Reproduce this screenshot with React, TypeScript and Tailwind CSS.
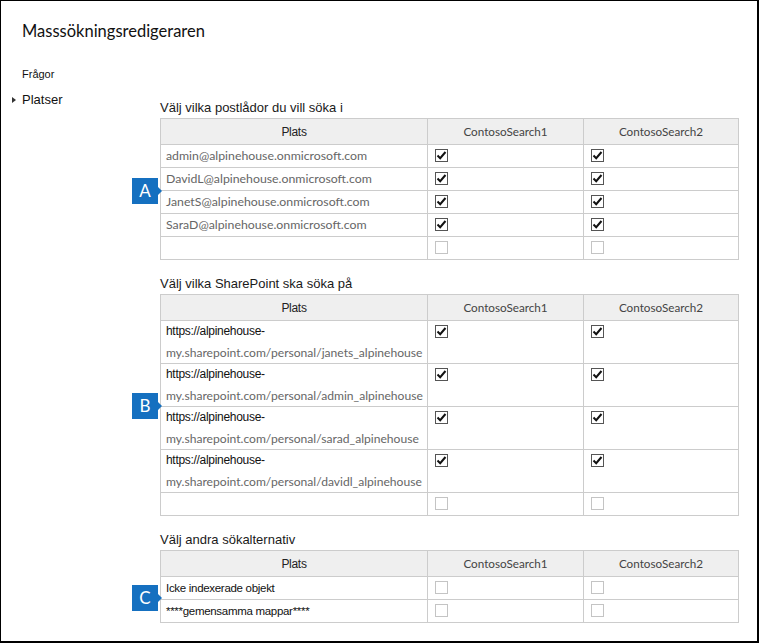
import React from "react";

const seg = "font-['Lato','Open_Sans',sans-serif]";
const ari = "font-['Liberation_Sans',Arial,sans-serif]";

function Check({ on }: { on: boolean }) {
  return (
    <div
      className={`w-[13px] h-[13px] border ${on ? "border-[#555]" : "border-[#c4c4c4]"} bg-white flex items-center justify-center`}
    >
      {on && (
        <svg width="11" height="11" viewBox="0 0 11 11">
          <path d="M1.5 5.5 L4.2 8.2 L9.5 2" fill="none" stroke="#111" strokeWidth="2" />
        </svg>
      )}
    </div>
  );
}

function Badge({ letter, top }: { letter: string; top: number }) {
  return (
    <div className="absolute left-[131px] flex items-center" style={{ top }}>
      <div className={`w-[26px] h-[26px] bg-[#1570c0] text-white text-[17px] flex items-center justify-center ${seg}`}>
        {letter}
      </div>
      <div className="w-0 h-0 border-y-[4px] border-y-transparent border-l-[4px] border-l-[#1570c0]" />
    </div>
  );
}

function Header() {
  return (
    <>
      <div className={`h-[26px] bg-[#efefef] border-r border-b border-[#cccccc] flex items-center justify-center text-[12px] text-[#222] tracking-[-0.3px] ${ari}`}>
        Plats
      </div>
      <div className={`h-[26px] bg-[#efefef] border-r border-b border-[#cccccc] flex items-center justify-center text-[11.7px] text-[#444] ${seg}`}>
        ContosoSearch1
      </div>
      <div className={`h-[26px] bg-[#efefef] border-r border-b border-[#cccccc] flex items-center justify-center text-[11.7px] text-[#444] ${seg}`}>
        ContosoSearch2
      </div>
    </>
  );
}

function Row({ children, on, h }: { children?: React.ReactNode; on: boolean; h: string }) {
  return (
    <>
      <div className={`${h} border-r border-b border-[#cccccc] pl-[5px] flex flex-col justify-center overflow-hidden`}>
        {children}
      </div>
      <div className={`${h} border-r border-b border-[#cccccc] pl-[7px] pt-[4px]`}>
        <Check on={on} />
      </div>
      <div className={`${h} border-r border-b border-[#cccccc] pl-[7px] pt-[4px]`}>
        <Check on={on} />
      </div>
    </>
  );
}

function Table({ children }: { children: React.ReactNode }) {
  return (
    <div className="grid grid-cols-[267px_156px_155px] border-l border-t border-[#cccccc] w-[579px]">
      {children}
    </div>
  );
}

function SectionTitle({ children }: { children: React.ReactNode }) {
  return (
    <div className={`h-[19px] text-[13px] leading-[17px] text-[#1a1a1a] ${ari}`}>{children}</div>
  );
}

export default function App() {
  const emails = [
    "admin@alpinehouse.onmicrosoft.com",
    "DavidL@alpinehouse.onmicrosoft.com",
    "JanetS@alpinehouse.onmicrosoft.com",
    "SaraD@alpinehouse.onmicrosoft.com",
  ];
  const urls = ["janets", "admin", "sarad", "davidl"];
  return (
    <div className="w-[759px] h-[643px] bg-white border-l border-t border-r-2 border-b-2 border-black relative overflow-hidden">
      <div className={`pl-[21px] pt-[18px] h-[60px] text-[16.5px] leading-[24px] text-[#111] ${seg}`}>
        Masssökningsredigeraren
      </div>
      <div className="flex">
        <div className="w-[159px] pt-[6px]">
          <div className={`pl-[21px] text-[11px] leading-[14px] text-[#111] ${ari}`}>Frågor</div>
          <div className="flex items-center mt-[11px] h-[16px]">
            <div className="ml-[11px] w-0 h-0 border-y-[3.5px] border-y-transparent border-l-[4px] border-l-[#333]" />
            <div className={`ml-[6px] text-[13px] leading-[16px] text-[#111] ${ari}`}>Platser</div>
          </div>
        </div>
        <div className="pt-[38px]">
          <SectionTitle>Välj vilka postlådor du vill söka i</SectionTitle>
          <Table>
            <Header />
            {emails.map((e) => (
              <Row key={e} on h="h-[23px]">
                <span className={`text-[12.3px] text-[#666] leading-[16px] ${seg}`}>{e}</span>
              </Row>
            ))}
            <Row on={false} h="h-[23px]" />
          </Table>
          <div className="h-[15px]" />
          <SectionTitle>Välj vilka SharePoint ska söka på</SectionTitle>
          <Table>
            <Header />
            {urls.map((u) => (
              <Row key={u} on h="h-[43px]">
                <span className={`text-[12px] text-[#111] leading-[21px] ${ari} tracking-[-0.3px]`}>https://alpinehouse-</span>
                <span className={`text-[12.1px] text-[#666] leading-[21px] whitespace-nowrap ${seg}`}>
                  my.sharepoint.com/personal/{u}_alpinehouse
                </span>
              </Row>
            ))}
            <Row on={false} h="h-[23px]" />
          </Table>
          <div className="h-[15px]" />
          <SectionTitle>Välj andra sökalternativ</SectionTitle>
          <Table>
            <Header />
            <Row on={false} h="h-[23px]">
              <span className={`text-[11.5px] text-[#111] leading-[16px] tracking-[-0.3px] ${ari}`}>Icke indexerade objekt</span>
            </Row>
            <Row on={false} h="h-[23px]">
              <span className={`text-[11.5px] text-[#111] leading-[16px] tracking-[-0.3px] ${ari}`}>****gemensamma mappar****</span>
            </Row>
          </Table>
        </div>
      </div>
      <Badge letter="A" top={177} />
      <Badge letter="B" top={392} />
      <Badge letter="C" top={584} />
    </div>
  );
}
